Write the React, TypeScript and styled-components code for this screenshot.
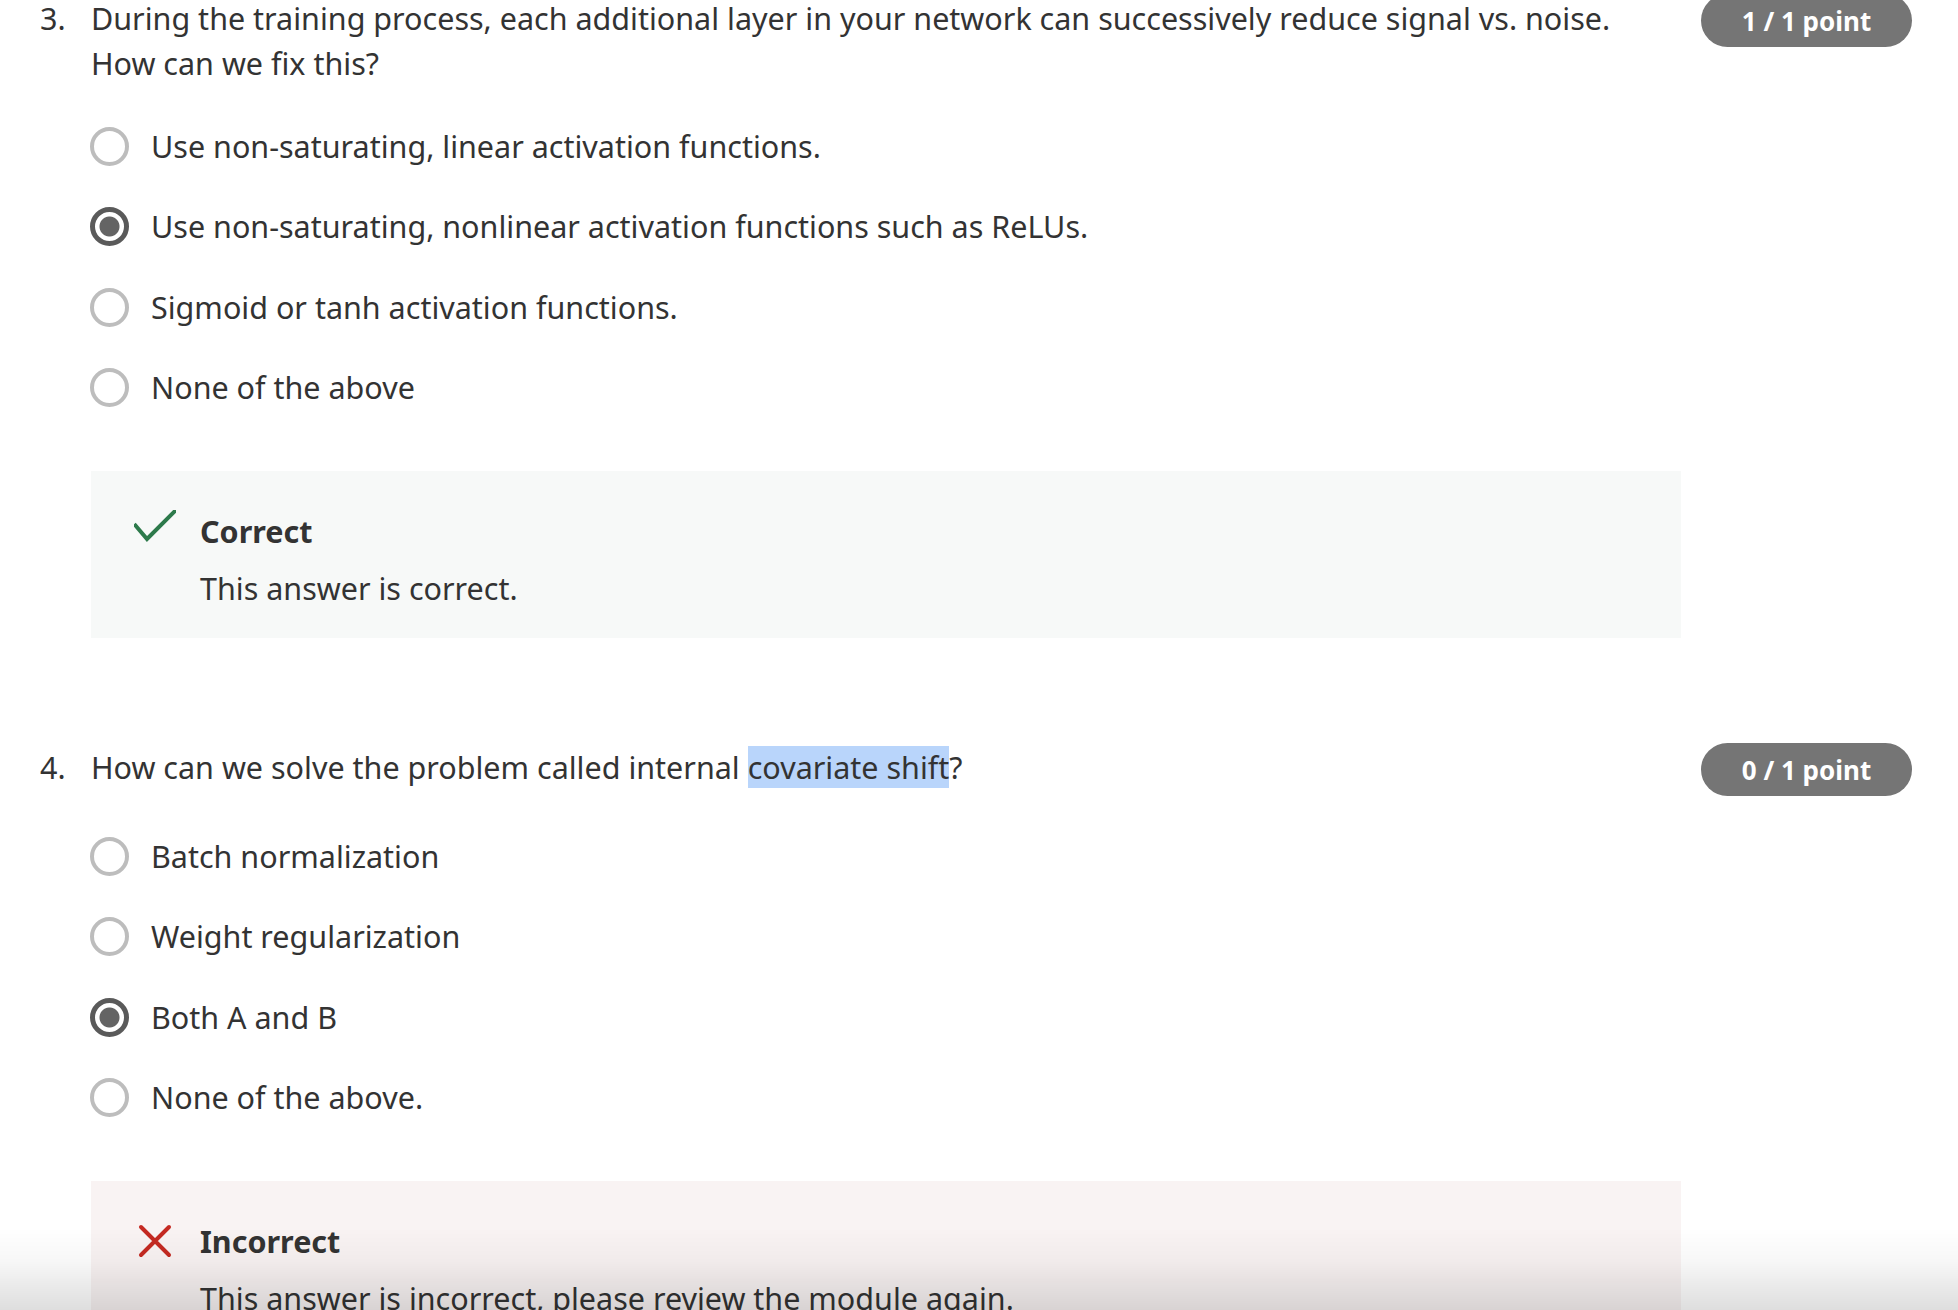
import type { ReactNode } from "react";
import styled, { createGlobalStyle } from "styled-components";

const GlobalStyle = createGlobalStyle`
  html, body {
    margin: 0;
    background: #ffffff;
  }
  body {
    font-family: "Noto Sans", "Open Sans", sans-serif;
    color: #333333;
    overflow: hidden;
  }
  ::selection {
    background: #b9d5fb;
  }
`;

const Page = styled.main`
  margin-top: -6px;
  padding: 0 46px 0 40px;
  display: flex;
  flex-direction: column;
  gap: 105px;
`;

const QuestionBlock = styled.section`
  display: grid;
  grid-template-columns: 51px 1fr 211px;
  align-items: start;
`;

const QNumber = styled.div`
  font-size: 30.5px;
  line-height: 45px;
  padding-top: 2px;
`;

const Prompt = styled.p`
  margin: 0 20px 0 0;
  padding-top: 2px;
  font-size: 30.5px;
  line-height: 45px;
  color: #333333;
`;

const Highlight = styled.span`
  background: #b9d5fb;
`;

const Body = styled.div`
  grid-column: 2;
  display: flex;
  flex-direction: column;
  margin-right: 20px;
`;

const OptionList = styled.ul`
  list-style: none;
  margin: 20px 0 0;
  padding: 0;
  display: flex;
  flex-direction: column;
`;

const OptionRow = styled.li`
  height: 80.5px;
  display: flex;
  align-items: center;
  gap: 22px;
  margin-left: -1px;
`;

const Radio = styled.span<{ $selected: boolean }>`
  box-sizing: border-box;
  flex: none;
  width: 39px;
  height: 39px;
  border-radius: 50%;
  border: ${(p) => (p.$selected ? "5px solid #5a5a5a" : "4px solid #bdbdbd")};
  background: ${(p) =>
    p.$selected
      ? "radial-gradient(circle, #646464 0 9.5px, #ffffff 10.5px)"
      : "#ffffff"};
`;

const OptionLabel = styled.span`
  font-size: 30.5px;
  line-height: 45px;
  color: #333333;
`;

const Feedback = styled.div<{ $correct: boolean }>`
  margin-top: 43px;
  display: grid;
  grid-template-columns: 42px 1fr;
  column-gap: 24px;
  row-gap: 12px;
  padding: 38px 40px 27px 43px;
  background: ${(p) => (p.$correct ? "#f7f9f8" : "#f9f3f3")};
`;

const IconCell = styled.div<{ $correct: boolean }>`
  grid-row: 1;
  display: flex;
  justify-content: center;
  padding-top: ${(p) => (p.$correct ? "1px" : "5px")};
`;

const FeedbackTitle = styled.div`
  grid-row: 1;
  grid-column: 2;
  font-size: 30.5px;
  line-height: 45px;
  font-weight: 700;
  color: #333333;
`;

const FeedbackText = styled.div`
  grid-row: 2;
  grid-column: 2;
  font-size: 30.5px;
  line-height: 45px;
  color: #333333;
`;

const PointBadge = styled.div`
  height: 53px;
  border-radius: 27px;
  background: #757575;
  color: #ffffff;
  font-size: 26px;
  font-weight: 700;
  display: flex;
  align-items: center;
  justify-content: center;
`;

const BottomFade = styled.div`
  position: fixed;
  left: 0;
  right: 0;
  bottom: 0;
  height: 82px;
  pointer-events: none;
  background: linear-gradient(
    to bottom,
    rgba(0, 0, 0, 0),
    rgba(0, 0, 0, 0.03) 40%,
    rgba(0, 0, 0, 0.13)
  );
`;

type Option = { label: string; selected?: boolean };

type QuestionData = {
  number: number;
  prompt: ReactNode;
  points: string;
  options: Option[];
  correct: boolean;
  feedback: string;
};

const questions: QuestionData[] = [
  {
    number: 3,
    prompt: (
      <>
        During the training process, each additional layer in your network can
        successively reduce signal vs. noise. How can we fix this?
      </>
    ),
    points: "1 / 1 point",
    options: [
      { label: "Use non-saturating, linear activation functions." },
      {
        label:
          "Use non-saturating, nonlinear activation functions such as ReLUs.",
        selected: true,
      },
      { label: "Sigmoid or tanh activation functions." },
      { label: "None of the above" },
    ],
    correct: true,
    feedback: "This answer is correct.",
  },
  {
    number: 4,
    prompt: (
      <>
        How can we solve the problem called internal{" "}
        <Highlight>covariate shift</Highlight>?
      </>
    ),
    points: "0 / 1 point",
    options: [
      { label: "Batch normalization" },
      { label: "Weight regularization" },
      { label: "Both A and B", selected: true },
      { label: "None of the above." },
    ],
    correct: false,
    feedback: "This answer is incorrect, please review the module again.",
  },
];

function CheckIcon() {
  return (
    <svg width="42" height="32" viewBox="0 0 42 32" fill="none">
      <polyline
        points="1.5,15.5 13,29 40.5,1.5"
        stroke="#2d7a4b"
        strokeWidth="4"
        strokeLinecap="square"
        strokeLinejoin="miter"
      />
    </svg>
  );
}

function CrossIcon() {
  return (
    <svg width="34" height="34" viewBox="0 0 34 34" fill="none">
      <path
        d="M3 3 L31 31 M31 3 L3 31"
        stroke="#c52a22"
        strokeWidth="4"
        strokeLinecap="round"
      />
    </svg>
  );
}

function Question({ q }: { q: QuestionData }) {
  return (
    <QuestionBlock>
      <QNumber>{q.number}.</QNumber>
      <Prompt>{q.prompt}</Prompt>
      <PointBadge>{q.points}</PointBadge>
      <Body>
        <OptionList>
          {q.options.map((o) => (
            <OptionRow key={o.label}>
              <Radio $selected={!!o.selected} />
              <OptionLabel>{o.label}</OptionLabel>
            </OptionRow>
          ))}
        </OptionList>
        <Feedback $correct={q.correct}>
          <IconCell $correct={q.correct}>
            {q.correct ? <CheckIcon /> : <CrossIcon />}
          </IconCell>
          <FeedbackTitle>{q.correct ? "Correct" : "Incorrect"}</FeedbackTitle>
          <FeedbackText>{q.feedback}</FeedbackText>
        </Feedback>
      </Body>
    </QuestionBlock>
  );
}

export default function App() {
  return (
    <>
      <GlobalStyle />
      <Page>
        {questions.map((q) => (
          <Question key={q.number} q={q} />
        ))}
      </Page>
      <BottomFade />
    </>
  );
}
